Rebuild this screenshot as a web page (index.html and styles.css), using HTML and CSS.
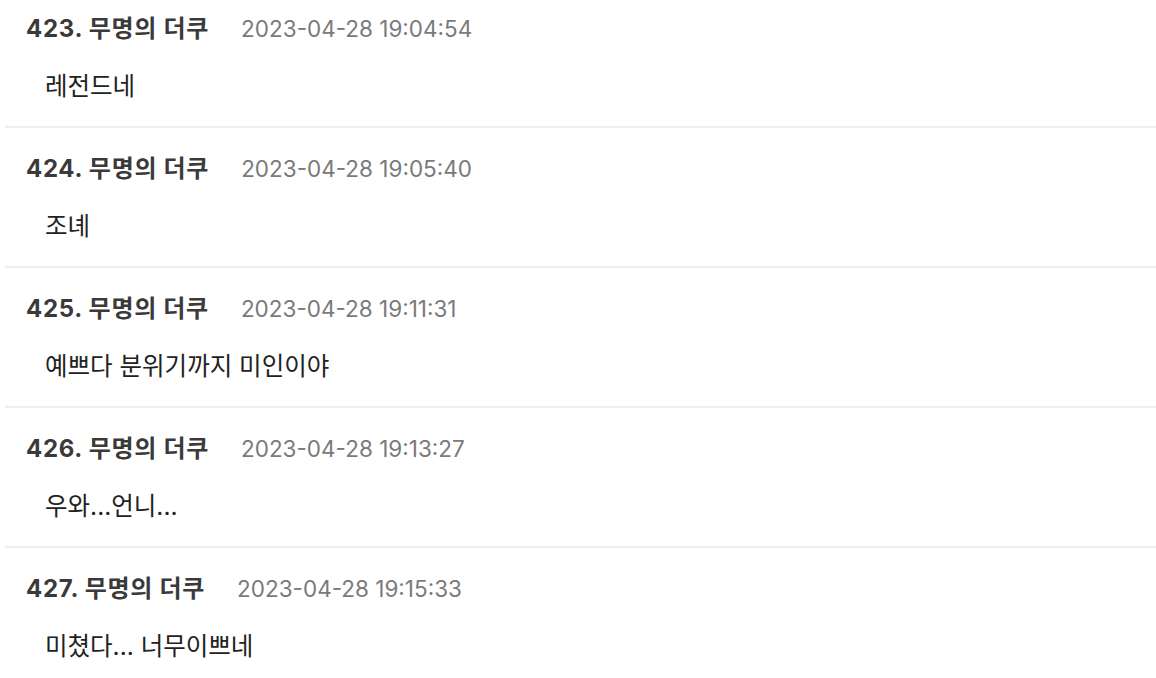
FILE: index.html
```html
<!DOCTYPE html>
<html lang="ko">
<head>
<meta charset="utf-8">
<link rel="stylesheet" href="styles.css">
</head>
<body>
<ul class="list">
  <li class="item">
    <div class="head"><span class="name">423. 무명의 더쿠</span><span class="date">2023-04-28 19:04:54</span></div>
    <div class="text">레전드네</div>
  </li>
  <li class="item">
    <div class="head"><span class="name">424. 무명의 더쿠</span><span class="date">2023-04-28 19:05:40</span></div>
    <div class="text">조녜</div>
  </li>
  <li class="item">
    <div class="head"><span class="name">425. 무명의 더쿠</span><span class="date">2023-04-28 19:11:31</span></div>
    <div class="text">예쁘다 분위기까지 미인이야</div>
  </li>
  <li class="item">
    <div class="head"><span class="name">426. 무명의 더쿠</span><span class="date">2023-04-28 19:13:27</span></div>
    <div class="text">우와...언니...</div>
  </li>
  <li class="item">
    <div class="head"><span class="name">427. 무명의 더쿠</span><span class="date">2023-04-28 19:15:33</span></div>
    <div class="text">미쳤다... 너무이쁘네</div>
  </li>
</ul>
</body>
</html>
```
FILE: styles.css
```css
html, body {
  margin: 0;
  padding: 0;
  background: #fff;
}
body {
  font-family: Inter, "Noto Sans CJK KR", sans-serif;
  overflow: hidden;
}
.list {
  list-style: none;
  margin: -12px 0 0 5px;
  padding: 0;
}
.item {
  padding: 25px 0 24px 0;
  border-bottom: 2px solid #eeeeee;
}
.head {
  display: flex;
  align-items: baseline;
  padding-left: 21px;
  height: 32px;
  line-height: 32px;
}
.name {
  font-size: 24px;
  font-weight: bold;
  letter-spacing: 0.7px;
  color: #3a3a3a;
}
.date {
  font-size: 22.5px;
  color: #7a7a7a;
  margin-left: 32px;
}
.text {
  margin-top: 25px;
  padding-left: 40px;
  height: 32px;
  line-height: 32px;
  font-size: 24.5px;
  color: #222;
}
```
